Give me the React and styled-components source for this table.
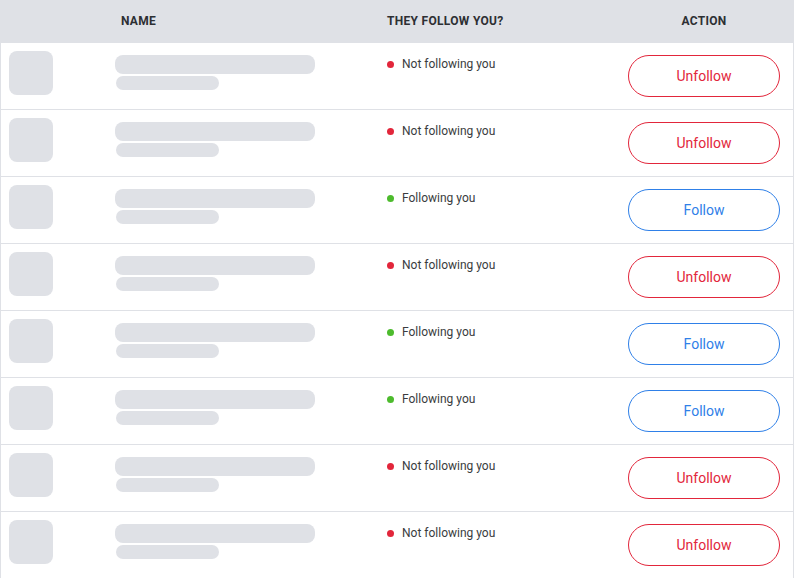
import React from 'react'
import styled, { createGlobalStyle } from 'styled-components'

const Global = createGlobalStyle`
  body {
    margin: 0;
    background: #fff;
    font-family: Roboto, "Liberation Sans", Arial, sans-serif;
  }
`

const rows = [false, false, true, false, true, true, false, false]

const Table = styled.div`
  width: 794px;
  box-sizing: border-box;
  border-left: 1px solid #dfe1e6;
  border-right: 1px solid #dfe1e6;
`

const Grid = styled.div`
  display: grid;
  grid-template-columns: 114px 272px 228px 1fr;
`

const Head = styled(Grid)`
  height: 43px;
  background: #dfe1e6;
  align-items: center;
  font-size: 12px;
  font-weight: 700;
  letter-spacing: 0.3px;
  color: #2d2f33;
`

const HeadCell = styled.div`
  padding-left: ${p => p.$pad || 0}px;
  text-align: ${p => (p.$center ? 'center' : 'left')};
  margin-top: -2px;
`

const Row = styled(Grid)`
  height: 66px;
  border-bottom: 1px solid #dfe1e6;
`

const Avatar = styled.div`
  width: 44px;
  height: 44px;
  margin: 8px 0 0 8px;
  border-radius: 8px;
  background: #dfe1e6;
`

const Name = styled.div`
  padding-top: 12px;
  display: flex;
  flex-direction: column;
  gap: 2px;
`

const Bar = styled.div`
  width: ${p => p.$w}px;
  height: ${p => p.$h}px;
  margin-left: ${p => p.$x || 0}px;
  border-radius: 8px;
  background: #dfe1e6;
`

const Status = styled.div`
  display: flex;
  align-items: center;
  gap: 8px;
  padding-top: 14px;
  height: 14px;
  font-size: 12px;
  color: #3a3c40;
`

const Dot = styled.span`
  width: 7px;
  height: 7px;
  border-radius: 50%;
  background: ${p => (p.$on ? '#4dbb2d' : '#e2263b')};
`

const Action = styled.div`
  display: flex;
  align-items: center;
  justify-content: center;
`

const Button = styled.button`
  width: 152px;
  height: 42px;
  border-radius: 21px;
  background: #fff;
  border: 1px solid ${p => (p.$follow ? '#2f80e8' : '#e2263b')};
  color: ${p => (p.$follow ? '#2f80e8' : '#e2263b')};
  font-family: Roboto, "Liberation Sans", Arial, sans-serif;
  font-size: 14px;
  cursor: pointer;
`

const App = () => {
  return (
    <>
      <Global />
      <Table>
        <Head>
          <div />
          <HeadCell $pad={6}>NAME</HeadCell>
          <HeadCell>THEY FOLLOW YOU?</HeadCell>
          <HeadCell $center>ACTION</HeadCell>
        </Head>
        {rows.map((following, i) => (
          <Row key={i}>
            <div>
              <Avatar />
            </div>
            <Name>
              <Bar $w={200} $h={19} />
              <Bar $w={103} $h={14} $x={1} />
            </Name>
            <Status>
              <Dot $on={following} />
              {following ? 'Following you' : 'Not following you'}
            </Status>
            <Action>
              <Button $follow={following}>{following ? 'Follow' : 'Unfollow'}</Button>
            </Action>
          </Row>
        ))}
      </Table>
    </>
  )
}

export default App
